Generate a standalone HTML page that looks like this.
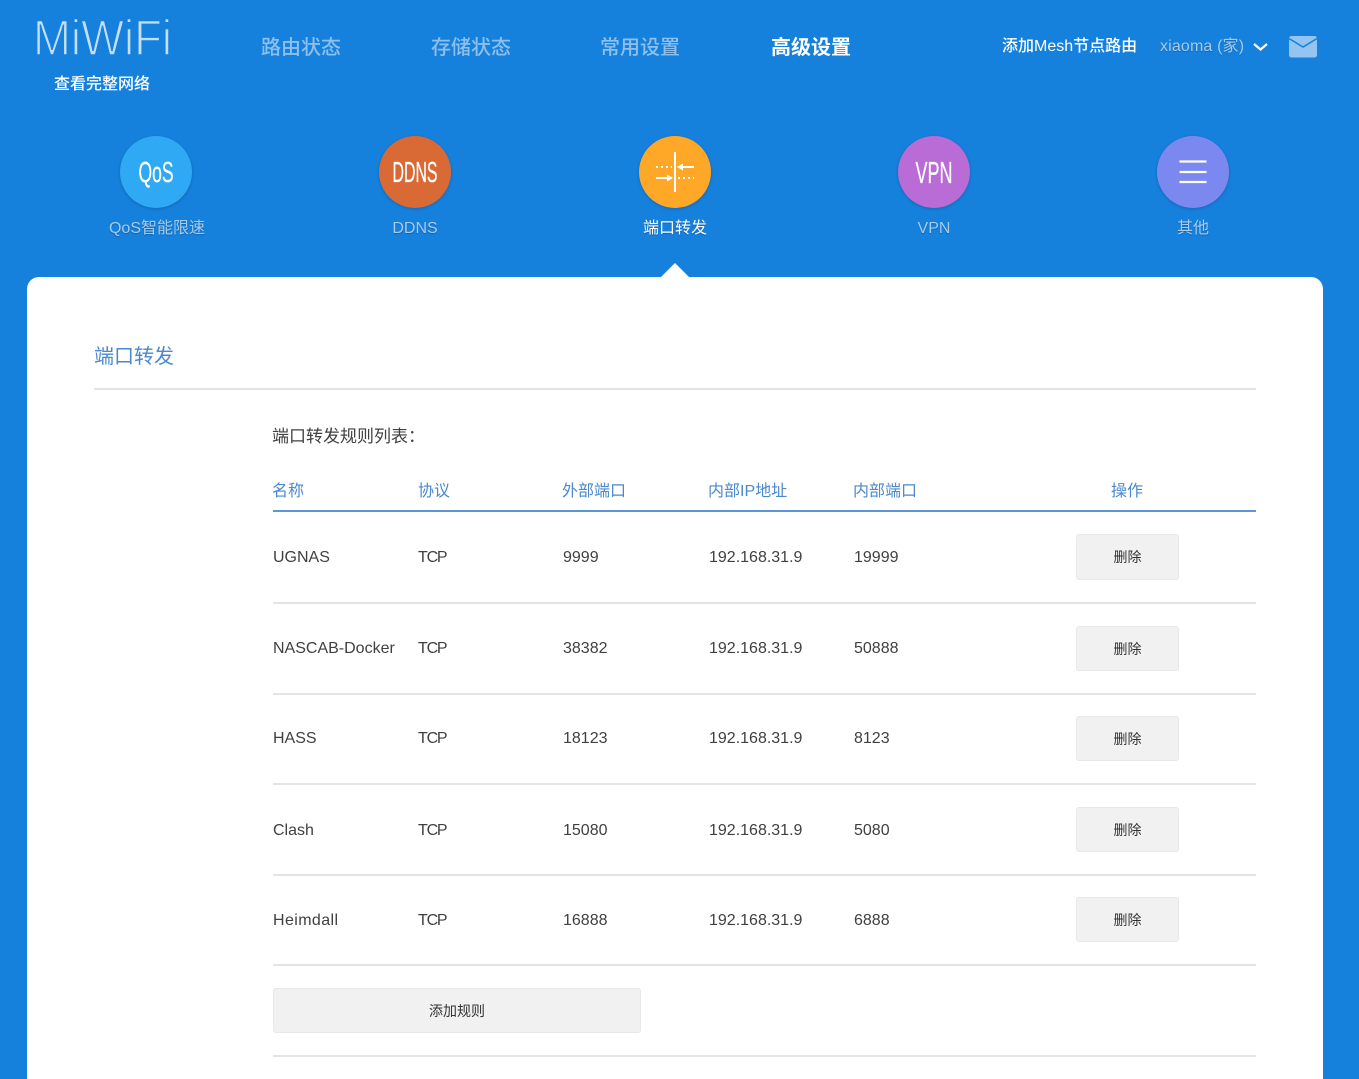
<!DOCTYPE html>
<html lang="zh"><head><meta charset="utf-8"><title>端口转发</title>
<style>
html,body{margin:0;padding:0;width:1359px;height:1079px;overflow:hidden;background:#1681dd}
body{font-family:"Liberation Sans","Noto Sans CJK SC",sans-serif;font-size:16px;color:#444}
#w{position:absolute;left:0;top:0;width:1359px;height:1079px;overflow:hidden;background:#1681dd;filter:blur(.35px)}
.t{position:absolute;line-height:24px;height:24px;white-space:nowrap}
.c{text-align:center;transform:translateX(-50%)}
.nav{font-size:20px;color:#8fc0ec;top:36px;font-weight:500}
.lab{color:#a5cbee;top:217px;text-shadow:0 1px 1px rgba(0,0,0,.25)}
.ci{position:absolute;width:72px;height:72px;border-radius:50%;top:136px;box-shadow:0 1px 3px rgba(0,0,0,.2)}
.ci svg{position:absolute;left:0;top:0}
.card{position:absolute;left:27px;top:277px;width:1296px;height:820px;background:#fff;border-radius:12px}
.tri{position:absolute;left:661px;top:263px;width:0;height:0;border-left:14px solid transparent;border-right:14px solid transparent;border-bottom:14px solid #fff}
.line{position:absolute;left:273px;width:983px;height:2px;background:#e4e4e4}
.h{color:#4a88cf;top:480px}
.btn{position:absolute;box-sizing:border-box;background:#f1f1f1;border:1px solid #e8e8e8;border-radius:3px;text-align:center;font-size:14px;color:#333;line-height:44px;left:1076px;width:103px;height:45px}
.d{color:#404040}
.p{letter-spacing:-1.2px}
</style></head><body><div id="w">

<svg style="position:absolute;left:30px;top:10px" width="150" height="55"><text x="3" y="45" font-family="Liberation Sans" font-size="50" textLength="139" lengthAdjust="spacingAndGlyphs" fill="#c4def6" stroke="#1681dd" stroke-width="1.5">MiWiFi</text></svg>
<div class="t" style="left:54px;top:73px;color:#fff;font-weight:500">查看完整网络</div>

<div class="t nav" style="left:261px">路由状态</div>
<div class="t nav" style="left:431px">存储状态</div>
<div class="t nav" style="left:600px">常用设置</div>
<div class="t nav" style="left:771px;color:#fff;font-weight:700">高级设置</div>

<div class="t" style="left:1002px;top:35px;color:#fff;font-weight:500">添加Mesh节点路由</div>
<div class="t" style="left:1160px;top:35px;color:#a5cbee;text-shadow:0 1px 1px rgba(0,0,0,.2);letter-spacing:.15px">xiaoma (家)</div>
<svg style="position:absolute;left:1252px;top:42px" width="18" height="11"><path d="M2 2 L8.500 7.500 L15 2" fill="none" stroke="#fff" stroke-width="2.2"/></svg>
<svg style="position:absolute;left:1289px;top:36px" width="28" height="22"><rect width="28" height="21.500" rx="2.500" fill="#94c4f1"/><path d="M0 2.500 L14 11 L28 2.500" fill="none" stroke="#1681dd" stroke-width="1.5"/></svg>

<div class="ci" style="left:120px;background:#2fa9f3"><svg width="72" height="72"><text x="36" y="46" text-anchor="middle" font-family="Liberation Sans" font-size="29" textLength="35" lengthAdjust="spacingAndGlyphs" fill="#fff" stroke="#fff" stroke-width=".25">QoS</text></svg></div>
<div class="ci" style="left:379px;background:#d96a35"><svg width="72" height="72"><text x="36" y="46" text-anchor="middle" font-family="Liberation Sans" font-size="29" textLength="45" lengthAdjust="spacingAndGlyphs" fill="#fff" stroke="#fff" stroke-width=".25">DDNS</text></svg></div>
<div class="ci" style="left:639px;background:#ffa726"><svg width="72" height="72"><path d="M36 16V56" stroke="#fff" stroke-width="2"/><path d="M17 31H33" stroke="#fff" stroke-width="2" stroke-dasharray="2 3"/><path d="M39 31H55M17 42H33" stroke="#fff" stroke-width="2"/><path d="M39 42H55" stroke="#fff" stroke-width="2" stroke-dasharray="2 3"/><path d="M38 31L44 27.500V34.500ZM34 42L28 38.500V45.500Z" fill="#fff"/></svg></div>
<div class="ci" style="left:898px;background:#b96cd5"><svg width="72" height="72"><text x="36" y="47" text-anchor="middle" font-family="Liberation Sans" font-size="31" textLength="37" lengthAdjust="spacingAndGlyphs" fill="#fff" stroke="#fff" stroke-width=".25">VPN</text></svg></div>
<div class="ci" style="left:1157px;background:#7b88f0"><svg width="72" height="72"><path d="M22.500 25.500H49.500M22.500 36H49.500M22.500 46H49.500" stroke="#fff" stroke-width="2.200"/></svg></div>

<div class="t c lab" style="left:157px">QoS智能限速</div>
<div class="t c lab" style="left:415px">DDNS</div>
<div class="t c lab" style="left:675px;color:#fff">端口转发</div>
<div class="t c lab" style="left:934px">VPN</div>
<div class="t c lab" style="left:1193px">其他</div>

<div class="tri"></div>
<div class="card"></div>

<div class="t" style="left:94px;top:345px;font-size:20px;color:#4a88cf">端口转发</div>
<div style="position:absolute;left:94px;top:388px;width:1162px;height:2px;background:#e4e4e4"></div>
<div class="t" style="left:272px;top:425px;color:#404040;font-size:17px">端口转发规则列表：</div>

<div class="t h" style="left:272px">名称</div>
<div class="t h" style="left:418px">协议</div>
<div class="t h" style="left:562px">外部端口</div>
<div class="t h" style="left:708px">内部IP地址</div>
<div class="t h" style="left:853px">内部端口</div>
<div class="t h c" style="left:1127px">操作</div>
<div class="line" style="top:510px;background:#5b97d8"></div>

<div class="t d" style="left:273px;top:546px">UGNAS</div><div class="t d p" style="left:418px;top:546px">TCP</div><div class="t d" style="left:563px;top:546px">9999</div><div class="t d" style="left:709px;top:546px">192.168.31.9</div><div class="t d" style="left:854px;top:546px">19999</div>
<div class="btn" style="top:534px;height:46px">删除</div>
<div class="line" style="top:602px"></div>

<div class="t d" style="left:273px;top:637px">NASCAB-Docker</div><div class="t d p" style="left:418px;top:637px">TCP</div><div class="t d" style="left:563px;top:637px">38382</div><div class="t d" style="left:709px;top:637px">192.168.31.9</div><div class="t d" style="left:854px;top:637px">50888</div>
<div class="btn" style="top:626px">删除</div>
<div class="line" style="top:693px"></div>

<div class="t d" style="left:273px;top:727px">HASS</div><div class="t d p" style="left:418px;top:727px">TCP</div><div class="t d" style="left:563px;top:727px">18123</div><div class="t d" style="left:709px;top:727px">192.168.31.9</div><div class="t d" style="left:854px;top:727px">8123</div>
<div class="btn" style="top:716px">删除</div>
<div class="line" style="top:783px"></div>

<div class="t d" style="left:273px;top:819px">Clash</div><div class="t d p" style="left:418px;top:819px">TCP</div><div class="t d" style="left:563px;top:819px">15080</div><div class="t d" style="left:709px;top:819px">192.168.31.9</div><div class="t d" style="left:854px;top:819px">5080</div>
<div class="btn" style="top:807px">删除</div>
<div class="line" style="top:874px"></div>

<div class="t d" style="left:273px;top:909px;letter-spacing:.4px">Heimdall</div><div class="t d p" style="left:418px;top:909px">TCP</div><div class="t d" style="left:563px;top:909px">16888</div><div class="t d" style="left:709px;top:909px">192.168.31.9</div><div class="t d" style="left:854px;top:909px">6888</div>
<div class="btn" style="top:897px">删除</div>
<div class="line" style="top:964px"></div>

<div class="btn" style="left:273px;top:988px;width:368px">添加规则</div>
<div class="line" style="top:1055px"></div>
</div></body></html>
